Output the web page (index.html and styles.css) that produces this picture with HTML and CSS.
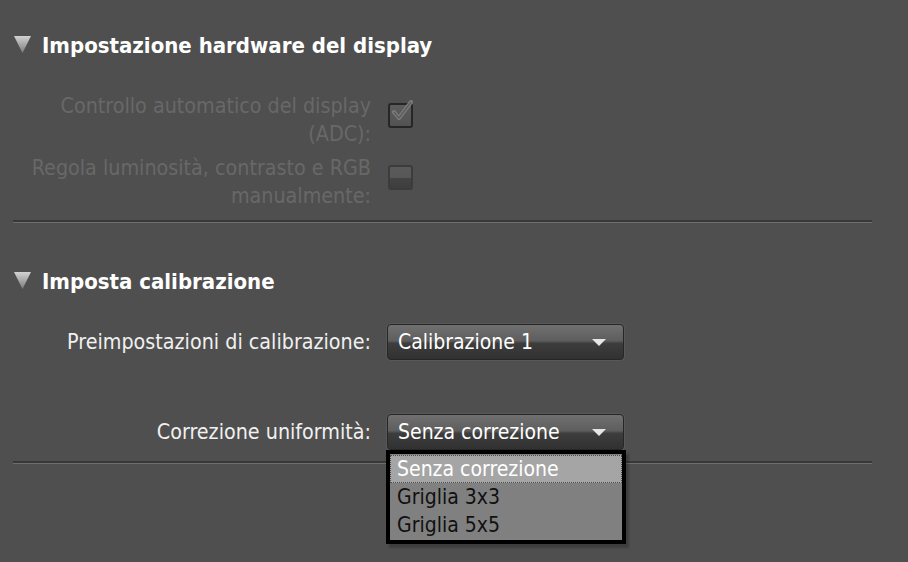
FILE: index.html
```html
<!DOCTYPE html>
<html lang="it">
<head>
  <meta charset="UTF-8" />
  <title>Impostazioni display</title>
  <link rel="stylesheet" href="styles.css">
</head>
<body>
  <div class="panel">
    <section class="group">
      <h2 class="group-title">
        <svg class="twisty" width="17" height="17" viewBox="0 0 17 17">
          <defs>
            <linearGradient id="tw1" x1="0" y1="0" x2="0" y2="1">
              <stop offset="0" stop-color="#d2d2d2"/>
              <stop offset="1" stop-color="#7c7c7c"/>
            </linearGradient>
          </defs>
          <path d="M0 0 H17 L8.5 17 Z" fill="url(#tw1)"/>
        </svg>
        Impostazione hardware del display
      </h2>

      <div class="row disabled">
        <label class="label">Controllo automatico del display<br>(ADC):</label>
        <span class="check checked">
          <svg width="26" height="26" viewBox="0 0 26 26">
            <path d="M5 12 L10 18 L22 2" fill="none" stroke="#7c7c7c" stroke-width="4" stroke-linejoin="round" stroke-linecap="round"/>
            <path d="M5 12 L10 18 L22 2" fill="none" stroke="#5e5e5e" stroke-width="1.5" stroke-linejoin="round"/>
          </svg>
        </span>
      </div>

      <div class="row disabled">
        <label class="label">Regola luminosità, contrasto e RGB<br>manualmente:</label>
        <span class="check"></span>
      </div>
    </section>

    <hr class="sep">

    <section class="group">
      <h2 class="group-title">
        <svg class="twisty" width="17" height="17" viewBox="0 0 17 17">
          <defs>
            <linearGradient id="tw2" x1="0" y1="0" x2="0" y2="1">
              <stop offset="0" stop-color="#d2d2d2"/>
              <stop offset="1" stop-color="#7c7c7c"/>
            </linearGradient>
          </defs>
          <path d="M0 0 H17 L8.5 17 Z" fill="url(#tw2)"/>
        </svg>
        Imposta calibrazione
      </h2>

      <div class="row row-select">
        <label class="label">Preimpostazioni di calibrazione:</label>
        <div class="select">
          <span>Calibrazione 1</span>
          <span class="arrow"></span>
        </div>
      </div>

      <div class="row row-select row-second">
        <label class="label">Correzione uniformità:</label>
        <div class="select-wrap">
          <div class="select">
            <span>Senza correzione</span>
            <span class="arrow"></span>
          </div>
          <ul class="menu">
            <li class="selected">Senza correzione</li>
            <li>Griglia 3x3</li>
            <li>Griglia 5x5</li>
          </ul>
        </div>
      </div>
    </section>

    <hr class="sep sep-last">
  </div>
</body>
</html>
```

FILE: styles.css
```css
html, body {
  height: 100%;
}
body {
  margin: 0;
  background: #4f4f4f;
  font-family: "DejaVu Sans Condensed", "DejaVu Sans", sans-serif;
  color: #f0f0f0;
}
.panel {
  padding: 30px 0 0 13px;
  width: 859px;
  min-height: 520px;
}
.group-title {
  display: flex;
  align-items: flex-start;
  gap: 11px;
  margin: 0;
  font-size: 22px;
  line-height: 32px;
  font-weight: bold;
  color: #fff;
}
.twisty {
  flex: none;
  margin: 6px 0 0 1px;
}
.row {
  display: flex;
  align-items: flex-start;
  gap: 17px;
}
.label {
  width: 358px;
  text-align: right;
  font-size: 21.3px;
  line-height: 28px;
}
.disabled .label {
  color: #686868;
}
.group-title + .row {
  margin-top: 30px;
}
.row + .row {
  margin-top: 6px;
}
.check {
  width: 21px;
  height: 21px;
  margin-top: 11px;
  border: 2px solid #3c3c3c;
  border-radius: 3px;
  background: linear-gradient(#5a5a5a 0, #575757 50%, #444 50%, #3e3e3e 100%);
  position: relative;
}
.check.checked {
  border-color: #262626;
  background: linear-gradient(#5c5c5c, #535353);
}
.check svg {
  position: absolute;
  left: -1px;
  top: -5px;
}
.sep {
  border: 0;
  border-top: 2px solid #383838;
  border-bottom: 1px solid #6e6e6e;
  margin: 10px 0 0 0;
  height: 0;
}
.sep + .group .group-title {
  margin-top: 43px;
}
.row-select {
  align-items: center;
  gap: 16px;
}
.group-title + .row-select {
  margin-top: 26px;
}
.row-select + .row-second {
  margin-top: 54px;
}
.sep-last {
  margin-top: 11px;
}
.select-wrap {
  position: relative;
}
.select {
  box-sizing: border-box;
  width: 237px;
  height: 36px;
  display: flex;
  align-items: center;
  justify-content: space-between;
  padding: 0 17px 0 10px;
  border: 1px solid #262626;
  border-radius: 4px;
  box-shadow: 0 0 0 1px #585858;
  background: linear-gradient(#707070 0, #5e5e5e 46%, #3d3d3d 54%, #313131 100%);
  font-size: 21px;
  color: #fff;
}
.arrow {
  width: 0;
  height: 0;
  border-left: 7px solid transparent;
  border-right: 7px solid transparent;
  border-top: 7px solid #e6e6e6;
}
.menu {
  position: absolute;
  left: -1px;
  top: 36px;
  box-sizing: border-box;
  width: 240px;
  margin: 0;
  padding: 1px 0;
  list-style: none;
  background: #808080;
  border: 4px solid #000;
  box-shadow: 3px 4px 2px rgba(0, 0, 0, 0.22);
  font-size: 21px;
  color: #111;
  z-index: 2;
}
.menu li {
  box-sizing: border-box;
  height: 28px;
  line-height: 26px;
  padding: 0 6px;
  border: 1px dotted transparent;
}
.menu li.selected {
  background: #a5a5a5;
  border-color: #4e4e4e;
  color: #fff;
}
```
